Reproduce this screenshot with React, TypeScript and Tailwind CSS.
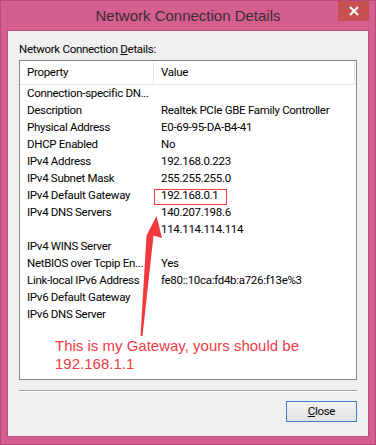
import React from "react";

const rows: [string, string][] = [
  ["Connection-specific DN...", ""],
  ["Description", "Realtek PCIe GBE Family Controller"],
  ["Physical Address", "E0-69-95-DA-B4-41"],
  ["DHCP Enabled", "No"],
  ["IPv4 Address", "192.168.0.223"],
  ["IPv4 Subnet Mask", "255.255.255.0"],
  ["IPv4 Default Gateway", "192.168.0.1"],
  ["IPv4 DNS Servers", "140.207.198.6"],
  ["", "114.114.114.114"],
  ["IPv4 WINS Server", ""],
  ["NetBIOS over Tcpip En...", "Yes"],
  ["Link-local IPv6 Address", "fe80::10ca:fd4b:a726:f13e%3"],
  ["IPv6 Default Gateway", ""],
  ["IPv6 DNS Server", ""],
];

export default function App() {
  return (
    <div
      className="relative w-[376px] h-[445px] bg-[#d45f8e] border border-[#b84a7b] flex flex-col overflow-hidden"
      style={{ fontFamily: '"Liberation Sans", Arial, sans-serif' }}
    >
      {/* Title bar */}
      <div className="h-[29px] flex items-center justify-center text-[15px] text-[#3a2a33] pt-[1px]">
        Network Connection Details
      </div>
      <div className="absolute -top-px right-[6px] w-[31px] h-[21px] bg-[#c75050] flex items-center justify-center">
        <svg width="10" height="10" viewBox="0 0 10 10">
          <path d="M1 1 L9 9 M9 1 L1 9" stroke="#fff" strokeWidth="2" />
        </svg>
      </div>

      {/* Client area */}
      <div
        className="mx-[6px] mb-[7px] flex-1 border border-[#b9527f] bg-[#f0f0f0] flex flex-col pt-[11px] px-[11px] text-[11.5px] tracking-[-0.3px] text-black"
        style={{ fontFamily: 'Roboto, "Liberation Sans", Arial, sans-serif' }}
      >
        <div className="leading-[15px] h-[15px]">
          Network Connection <span className="underline">D</span>etails:
        </div>
        <div className="relative mt-[3px] h-[320px] border border-[#828790] bg-white">
          <div className="flex h-[24px] border-b border-[#e5e5e5] leading-[23px]">
            <div className="w-[134px] pl-[7px] border-r border-[#e5e5e5]">Property</div>
            <div className="flex-1 pl-[7px] border-r border-[#e5e5e5] mr-[1px]">Value</div>
          </div>
          {rows.map(([k, v], i) => (
            <div key={i} className="flex h-[17px] leading-[17px] whitespace-nowrap">
              <div className="w-[134px] pl-[7px]">{k}</div>
              <div className="flex-1 pl-[7px]">{v}</div>
            </div>
          ))}
          {/* red annotation box */}
          <div className="absolute left-[134px] top-[128px] w-[73px] h-[16px] border border-[#f03c3c]" />
          {/* annotation text */}
          <div
            className="absolute left-[35px] top-[276px] text-[15px] leading-[18px] tracking-normal text-[#f33b45]"
            style={{ fontFamily: '"Liberation Sans", Arial, sans-serif' }}
          >
            This is my Gateway, yours should be
            <br />
            192.168.1.1
          </div>
        </div>
        <div className="mt-[10px] h-[2px] border-t border-[#a0a0a0] border-b border-b-white" />
        <div className="flex justify-end mt-[9px]">
          <div className="w-[71px] h-[21px] border border-[#3c7fd1] bg-gradient-to-b from-[#f2f2f2] to-[#e3e3e3] flex items-center justify-center leading-[19px]">
            <span>
              <span className="underline">C</span>lose
            </span>
          </div>
        </div>
      </div>

      {/* Arrow annotation */}
      <svg className="absolute left-0 top-0 pointer-events-none" width="376" height="445" viewBox="0 0 376 445">
        <polygon
          points="155.5,215 161,237 152.5,234.5 141.5,335 139.5,335 145.5,234.5 144,237.5"
          fill="#f23a3e"
        />
      </svg>
    </div>
  );
}
